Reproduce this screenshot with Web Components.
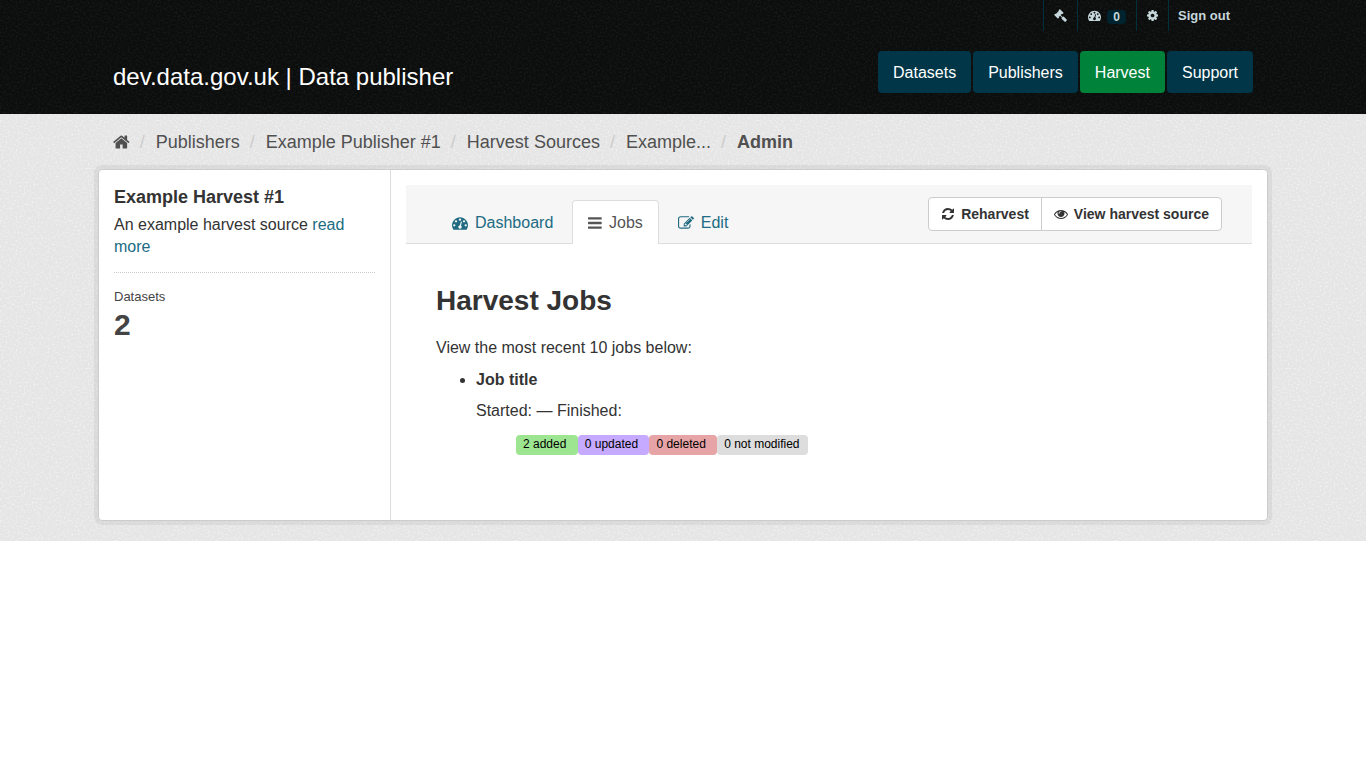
<!DOCTYPE html>
<html lang="en">
<head>
<meta charset="utf-8">
<meta name="viewport" content="width=device-width, initial-scale=1">
<title>Harvest Jobs - Data publisher</title>
<style>
  body {
    margin: 0;
    background: #fff;
    color: #333;
    font: 16px/22px "Liberation Sans", Arial, sans-serif;
    --link: #206b82;
    --line: #ddd;
    --grain-dark: url("data:image/svg+xml,%3Csvg xmlns='http://www.w3.org/2000/svg' width='100' height='100'%3E%3Cfilter id='n'%3E%3CfeTurbulence type='fractalNoise' baseFrequency='.5' numOctaves='2' stitchTiles='stitch'/%3E%3CfeColorMatrix values='0 0 0 0 1 0 0 0 0 1 0 0 0 0 1 .12 0 0 0 -.05'/%3E%3C/filter%3E%3Crect width='100' height='100' filter='url(%23n)'/%3E%3C/svg%3E");
    --grain-light: url("data:image/svg+xml,%3Csvg xmlns='http://www.w3.org/2000/svg' width='100' height='100'%3E%3Cfilter id='n'%3E%3CfeTurbulence type='fractalNoise' baseFrequency='.5' numOctaves='2' stitchTiles='stitch'/%3E%3CfeColorMatrix values='0 0 0 0 1 0 0 0 0 1 0 0 0 0 1 1.2 0 0 0 -.55'/%3E%3C/filter%3E%3Crect width='100' height='100' filter='url(%23n)'/%3E%3C/svg%3E");
  }
</style>
</head>
<body>
<dp-header heading="dev.data.gov.uk | Data publisher">
  <dp-account slot="account"></dp-account>
  <dp-nav slot="nav"></dp-nav>
</dp-header>
<dp-page>
  <dp-breadcrumb slot="toolbar"></dp-breadcrumb>
  <dp-source-info slot="aside" heading="Example Harvest #1" count="2">An example harvest source</dp-source-info>
  <dp-tab-bar></dp-tab-bar>
  <dp-jobs></dp-jobs>
</dp-page>

<script>
const ICONS = {
  home: ['64 0 1664 1792', 'M1472 992v480q0 26-19 45t-45 19h-384v-384h-256v384h-384q-26 0-45-19t-19-45v-480q0-1 .5-3t.5-3l575-474 575 474q1 2 1 6zm223-69l-62 74q-8 9-21 11h-3q-13 0-21-7l-692-577-692 577q-12 8-24 7-13-2-21-11l-62-74q-8-10-7-23.5t11-21.5l719-599q32-26 76-26t76 26l244 204v-195q0-14 9-23t23-9h192q14 0 23 9t9 23v408l219 182q10 8 11 21.5t-7 23.5z'],
  gauge: ['0 0 1792 1792', 'M384 1152q0-53-37.500-90.500t-90.500-37.500-90.500 37.500-37.500 90.500 37.500 90.500 90.500 37.500 90.500-37.500 37.500-90.500zm192-448q0-53-37.500-90.500t-90.500-37.500-90.500 37.500-37.500 90.500 37.500 90.500 90.500 37.500 90.500-37.500 37.500-90.500zm428 481l101-382q6-26-7.500-48.500t-38.500-29.500-48 6.500-30 39.500l-101 382q-60 5-107 43.500t-63 98.500q-20 77 20 146t117 89 146-20 89-117q16-60-6-117t-72-91zm660-33q0-53-37.500-90.500t-90.500-37.500-90.500 37.500-37.500 90.500 37.500 90.500 90.500 37.500 90.500-37.500 37.500-90.500zm-640-640q0-53-37.500-90.500t-90.500-37.500-90.500 37.500-37.500 90.500 37.500 90.500 90.500 37.500 90.500-37.500 37.500-90.500zm448 192q0-53-37.500-90.500t-90.500-37.500-90.500 37.500-37.500 90.500 37.500 90.500 90.500 37.500 90.500-37.500 37.500-90.500zm320 448q0 261-141 483-19 29-54 29h-1402q-35 0-54-29-141-221-141-483 0-182 71-348t191-286 286-191 348-71 348 71 286 191 191 286 71 348z'],
  bars: ['128 0 1536 1792', 'M1664 1344v128q0 26-19 45t-45 19h-1408q-26 0-45-19t-19-45v-128q0-26 19-45t45-19h1408q26 0 45 19t19 45zm0-512v128q0 26-19 45t-45 19h-1408q-26 0-45-19t-19-45v-128q0-26 19-45t45-19h1408q26 0 45 19t19 45zm0-512v128q0 26-19 45t-45 19h-1408q-26 0-45-19t-19-45v-128q0-26 19-45t45-19h1408q26 0 45 19t19 45z'],
  edit: ['0 0 1792 1792', 'M888 1184l116-116-152-152-116 116v56h96v96h56zm440-720q-16-16-33 1l-350 350q-17 17-1 33t33-1l350-350q17-17 1-33zm80 594v190q0 119-84.500 203.500t-203.500 84.500h-832q-119 0-203.500-84.500t-84.500-203.500v-832q0-119 84.500-203.500t203.500-84.500h832q63 0 117 25 15 7 18 23 3 17-9 29l-49 49q-14 14-32 8-23-6-45-6h-832q-66 0-113 47t-47 113v832q0 66 47 113t113 47h832q66 0 113-47t47-113v-126q0-13 9-22l64-64q15-15 35-7t20 29zm-96-738l288 288-672 672h-288v-288zm444 132l-92 92-288-288 92-92q28-28 68-28t68 28l152 152q28 28 28 68t-28 68z'],
  refresh: ['128 0 1536 1792', 'M1639 1056q0 5-1 7-64 268-268 434.500t-478 166.500q-146 0-282.500-55t-243.500-157l-129 129q-19 19-45 19t-45-19-19-45v-448q0-26 19-45t45-19h448q26 0 45 19t19 45-19 45l-137 137q71 66 161 102t187 36q134 0 250-65t186-179q11-17 53-117 8-23 30-23h192q13 0 22.500 9.500t9.500 22.500zm25-800v448q0 26-19 45t-45 19h-448q-26 0-45-19t-19-45 19-45l138-138q-148-137-349-137-134 0-250 65t-186 179q-11 17-53 117-8 23-30 23h-199q-13 0-22.500-9.500t-9.500-22.500v-7q65-268 270-434.500t480-166.500q146 0 284 55.500t245 156.500l130-129q19-19 45-19t45 19 19 45z'],
  eye: ['0 0 1792 1792', 'M1664 960q-152-236-381-353 61 104 61 225 0 185-131.500 316.500t-316.500 131.500-316.500-131.500-131.500-316.500q0-121 61-225-229 117-381 353 133 205 333.500 326.500t434.500 121.500 434.500-121.500 333.500-326.500zm-720-384q0-20-14-34t-34-14q-125 0-214.500 89.500t-89.500 214.500q0 20 14 34t34 14 34-14 14-34q0-86 61-147t147-61q20 0 34-14t14-34zm848 384q0 34-20 69-140 230-376.500 368.500t-499.500 138.500-499.500-139-376.500-368q-20-35-20-69t20-69q140-229 376.500-368t499.500-139 499.500 139 376.500 368q20 35 20 69z'],
  cog: ['128 0 1536 1792', 'M1152 896q0-106-75-181t-181-75-181 75-75 181 75 181 181 75 181-75 75-181zm512-109v222q0 12-8 23t-20 13l-185 28q-19 54-39 91 35 50 107 138 10 12 10 25t-9 23q-27 37-99 108t-94 71q-12 0-26-9l-138-108q-44 23-91 38-16 136-29 186-7 28-36 28h-222q-14 0-24.500-8.500t-11.500-21.500l-28-184q-49-16-90-37l-141 107q-10 9-25 9-14 0-25-11-126-114-165-168-7-10-7-23 0-12 8-23 15-21 51-66.500t54-70.500q-27-50-41-99l-183-27q-13-2-21-12.500t-8-23.500v-222q0-12 8-23t19-13l186-28q14-46 39-92-40-57-107-138-10-12-10-24 0-10 9-23 26-36 98.500-107.500t94.500-71.500q13 0 26 10l138 107q44-23 91-38 16-136 29-186 7-28 36-28h222q14 0 24.500 8.500t11.500 21.500l28 184q49 16 90 37l142-107q9-9 24-9 13 0 25 10 129 119 165 170 7 8 7 22 0 12-8 23-15 21-51 66.500t-54 70.500q26 50 41 98l183 28q13 2 21 12.500t8 23.500z'],
  gavel: ['0 0 1792 1792', 'M1771 1536q0 53-37 90l-107 108q-39 37-91 37-53 0-90-37l-363-364q-38-36-38-90 0-53 43-96l-256-256-126 126q-14 14-34 14t-34-14q2 2 12.500 12t12.500 13 10 11.500 10 13.500 6 13.500 5.500 16.500 1.500 18q0 38-28 68-3 3-16.500 18t-19 20.500-18.500 16.500-22 15.500-22 9-26 4.500q-40 0-68-28l-408-408q-28-28-28-68 0-13 4.500-26t9-22 15.500-22 16.500-18.500 20.500-19 18-16.500q30-28 68-28 10 0 18 1.500t16.500 5.500 13.500 6 13.500 10 11.500 10 13 12.500 12 12.500q-14-14-14-34t14-34l348-348q14-14 34-14t34 14q-2-2-12.500-12t-12.500-13-10-11.500-10-13.500-6-13.500-5.500-16.500-1.500-18q0-38 28-68 3-3 16.500-18t19-20.500 18.500-16.500 22-15.500 22-9 26-4.500q40 0 68 28l408 408q28 28 28 68 0 13-4.500 26t-9 22-15.500 22-16.500 18.500-20.500 19-18 16.500q-30 28-68 28-10 0-18-1.500t-16.500-5.500-13.500-6-13.500-10-11.500-10-13-12.500-12-12.500q14 14 14 34t-14 34l-126 126 256 256q43-43 96-43 52 0 91 37l363 363q37 39 37 91z']
};

/* Registers an element whose shadow root is rendered once from its attributes. */
function component(name, render) {
  customElements.define(name, class extends HTMLElement {
    constructor() {
      super();
      this.attachShadow({ mode: 'open' });
    }
    connectedCallback() {
      this.shadowRoot.innerHTML = render(this);
    }
  });
}

component('dp-icon', el => {
  const [box, path] = ICONS[el.getAttribute('name')];
  return `<style>
    :host { display: inline-flex; flex: none; }
    svg { display: block; height: 1em; fill: currentColor; }
  </style><svg viewBox="${box}" aria-hidden="true"><path d="${path}"/></svg>`;
});

component('dp-header', el => `<style>
    :host { display: block; background: #0b0c0c var(--grain-dark); color: #fff; }
    .inner { box-sizing: border-box; max-width: 1170px; margin: 0 auto; padding: 0 15px 21px; }
    .row { display: flex; justify-content: space-between; align-items: center; padding-top: 20px; }
    h1 { margin: 0; padding-top: 10px; font-size: 24px; line-height: 32px; font-weight: 400; }
    a { color: inherit; text-decoration: none; }
  </style>
  <header class="inner">
    <slot name="account"></slot>
    <div class="row"><h1><a href="#">${el.getAttribute('heading')}</a></h1><slot name="nav"></slot></div>
  </header>`);

component('dp-account', () => `<style>
    :host { display: block; font-size: 13px; font-weight: 700; line-height: 31px; }
    ul { display: flex; justify-content: flex-end; list-style: none; margin: 0; padding: 0 13px 0 0; }
    li { border-left: 1px solid #00303e; }
    a { display: flex; align-items: center; gap: 6px; height: 31px; padding: 0 10px; color: #c6d7db; text-decoration: none; }
    li:last-child a { padding-left: 9px; }
    .badge { padding: 0 6px; border-radius: 4px; background: #00242f; font-size: 12px; line-height: 14px; margin-top: 2px; }
  </style>
  <nav aria-label="Account"><ul>
    <li><a href="#" aria-label="Sysadmin settings"><dp-icon name="gavel"></dp-icon></a></li>
    <li><a href="#" aria-label="Dashboard"><dp-icon name="gauge"></dp-icon><span class="badge">0</span></a></li>
    <li><a href="#" aria-label="Settings"><dp-icon name="cog"></dp-icon></a></li>
    <li><a href="#">Sign out</a></li>
  </ul></nav>`);

component('dp-nav', () => `<style>
    :host { display: block; }
    ul { display: flex; gap: 2px; list-style: none; margin: 0; padding: 0; }
    a { display: block; padding: 11px 15px 9px; border-radius: 4px; background: #003647; color: #fff; text-decoration: none; }
    a[aria-current] { background: #00823b; }
  </style>
  <nav aria-label="Main"><ul>
    <li><a href="#">Datasets</a></li>
    <li><a href="#">Publishers</a></li>
    <li><a href="#" aria-current="true">Harvest</a></li>
    <li><a href="#">Support</a></li>
  </ul></nav>`);

component('dp-page', () => `<style>
    :host { display: block; background: #e5e5e5 var(--grain-light); padding-bottom: 20px; }
    .container { box-sizing: border-box; max-width: 1170px; margin: 0 auto; }
    .wrapper { display: grid; grid-template-columns: 1fr 3fr; min-height: 350px; background: #fff; border: 1px solid #ccc; border-radius: 4px; box-shadow: 0 0 0 4px rgba(0, 0, 0, .05); }
    aside { padding: 15px; border-right: 1px solid var(--line); }
    main { padding: 15px; }
  </style>
  <div class="container">
    <slot name="toolbar"></slot>
    <div class="wrapper">
      <aside><slot name="aside"></slot></aside>
      <main><slot></slot></main>
    </div>
  </div>`);

component('dp-breadcrumb', () => `<style>
    :host { display: block; padding: 16px 15px 15px; font-size: 18px; line-height: 24px; }
    ol { display: flex; flex-wrap: wrap; list-style: none; margin: 0; padding: 0; }
    li { display: flex; align-items: center; }
    li + li::before { content: "/"; width: 6px; margin: 0 10px; color: #ccc; }
    a { display: flex; color: #505050; text-decoration: none; }
    li:last-child a { font-weight: 700; }
  </style>
  <nav aria-label="Breadcrumb"><ol>
    <li><a href="#" aria-label="Home"><dp-icon name="home"></dp-icon></a></li>
    <li><a href="#">Publishers</a></li>
    <li><a href="#">Example Publisher #1</a></li>
    <li><a href="#">Harvest Sources</a></li>
    <li><a href="#">Example...</a></li>
    <li><a href="#">Admin</a></li>
  </ol></nav>`);

component('dp-source-info', el => `<style>
    :host { display: block; }
    h2 { margin: 0 0 5px; font-size: 18px; line-height: 24px; }
    p { margin: 0; }
    a { color: var(--link); text-decoration: none; }
    dl { margin: 14px 0 0; padding-top: 15px; border-top: 1px dotted #ccc; color: #444; }
    dt { font-size: 13px; line-height: 18px; }
    dd { margin: 2px 0 0; font-size: 30px; line-height: 34px; font-weight: 700; }
  </style>
  <section>
    <h2>${el.getAttribute('heading')}</h2>
    <p><slot></slot> <a href="#">read more</a></p>
    <dl><dt>Datasets</dt><dd>${el.getAttribute('count')}</dd></dl>
  </section>`);

component('dp-tab-bar', () => `<style>
    :host { display: block; }
    header { display: flex; justify-content: space-between; padding: 12px 30px 0; background: #f6f6f6; border-bottom: 1px solid var(--line); }
    ul { display: flex; gap: 3px; list-style: none; margin: 3px 0 -1px; padding: 0; }
    ul a { display: flex; align-items: center; gap: 7px; padding: 10px 15px; border: 1px solid transparent; border-bottom: 0; border-radius: 4px 4px 0 0; line-height: 23px; color: var(--link); text-decoration: none; }
    ul a[aria-current] { border-color: var(--line); background: #fff; color: #555; }
    .actions { display: flex; align-self: flex-start; }
    .actions a { display: flex; align-items: center; gap: 6px; padding: 6px 12px; border: 1px solid #ccc; background: #fff; color: #333; font-size: 14px; line-height: 20px; font-weight: 700; text-decoration: none; }
    .actions a:first-child { border-radius: 4px 0 0 4px; }
    .actions a:last-child { border-radius: 0 4px 4px 0; margin-left: -1px; }
    .actions dp-icon { width: 14px; justify-content: center; }
  </style>
  <header>
    <ul>
      <li><a href="#"><dp-icon name="gauge"></dp-icon>Dashboard</a></li>
      <li><a href="#" aria-current="page"><dp-icon name="bars"></dp-icon>Jobs</a></li>
      <li><a href="#"><dp-icon name="edit"></dp-icon>Edit</a></li>
    </ul>
    <div class="actions">
      <a href="#"><dp-icon name="refresh"></dp-icon>Reharvest</a>
      <a href="#"><dp-icon name="eye"></dp-icon>View harvest source</a>
    </div>
  </header>`);

component('dp-label', el => `<style>
    :host { display: block; padding: 0 8px 2px 7px; border-radius: 4px; background: var(--tone, #ddd); color: #000; font-size: 12px; line-height: 18px; white-space: pre; }
  </style><slot></slot>`);

component('dp-jobs', () => `<style>
    :host { display: block; padding: 40px 30px 30px; }
    h1 { margin: 0 0 20px; font-size: 28px; line-height: 33px; }
    p { margin: 0 0 10px; line-height: 22px; }
    ul { margin: 0; padding-left: 40px; }
    h2 { margin: 0 0 9px; font-size: 16px; line-height: 22px; }
    .counts { display: flex; flex-wrap: wrap; margin-top: 13px; list-style: none; }
    .added { --tone: #9ee592; }
    .updated { --tone: #c5aaff; }
    .deleted { --tone: #e7a4a6; }
  </style>
  <section>
    <h1>Harvest Jobs</h1>
    <p>View the most recent 10 jobs below:</p>
    <ul><li>
      <h2>Job title</h2>
      <p>Started: — Finished:</p>
      <ul class="counts">
        <li><dp-label class="added">2 added </dp-label></li>
        <li><dp-label class="updated">0 updated </dp-label></li>
        <li><dp-label class="deleted">0 deleted </dp-label></li>
        <li><dp-label>0 not modified</dp-label></li>
      </ul>
    </li></ul>
  </section>`);
</script>
</body>
</html>
